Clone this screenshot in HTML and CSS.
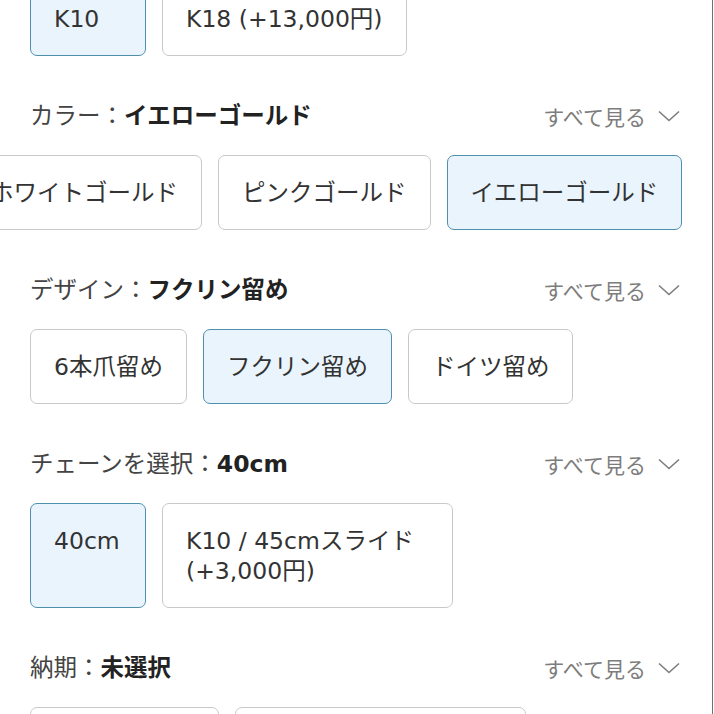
FILE: index.html
```html
<!DOCTYPE html>
<html lang="ja">
<head>
<meta charset="utf-8">
<title>オプション選択</title>
<link rel="stylesheet" href="styles.css">
</head>
<body>
<div class="page">
  <div class="inner">
    <section class="group group-first">
      <div class="options">
        <button class="opt is-selected"><span class="opt-text">K10</span></button>
        <button class="opt"><span class="opt-text">K18 (+13,000円)</span></button>
      </div>
    </section>

    <section class="group">
      <div class="group-head">
        <div class="label">カラー：<b>イエローゴールド</b></div>
        <button class="see-all">すべて見る<svg class="chev" viewBox="0 0 22 12" width="22" height="12"><path d="M1 1.5 L11 10.5 L21 1.5" fill="none" stroke="#7d7d7d" stroke-width="1.6"/></svg></button>
      </div>
      <div class="options options-scrolled">
        <button class="opt"><span class="opt-text">ホワイトゴールド</span></button>
        <button class="opt"><span class="opt-text">ピンクゴールド</span></button>
        <button class="opt is-selected"><span class="opt-text">イエローゴールド</span></button>
      </div>
    </section>

    <section class="group">
      <div class="group-head">
        <div class="label">デザイン：<b>フクリン留め</b></div>
        <button class="see-all">すべて見る<svg class="chev" viewBox="0 0 22 12" width="22" height="12"><path d="M1 1.5 L11 10.5 L21 1.5" fill="none" stroke="#7d7d7d" stroke-width="1.6"/></svg></button>
      </div>
      <div class="options">
        <button class="opt"><span class="opt-text">6本爪留め</span></button>
        <button class="opt is-selected"><span class="opt-text">フクリン留め</span></button>
        <button class="opt"><span class="opt-text">ドイツ留め</span></button>
      </div>
    </section>

    <section class="group">
      <div class="group-head">
        <div class="label">チェーンを選択：<b>40cm</b></div>
        <button class="see-all">すべて見る<svg class="chev" viewBox="0 0 22 12" width="22" height="12"><path d="M1 1.5 L11 10.5 L21 1.5" fill="none" stroke="#7d7d7d" stroke-width="1.6"/></svg></button>
      </div>
      <div class="options">
        <button class="opt is-selected"><span class="opt-text">40cm</span></button>
        <button class="opt"><span class="opt-text">K10 / 45cmスライド (+3,000円)</span></button>
      </div>
    </section>

    <section class="group">
      <div class="group-head">
        <div class="label">納期：<b>未選択</b></div>
        <button class="see-all">すべて見る<svg class="chev" viewBox="0 0 22 12" width="22" height="12"><path d="M1 1.5 L11 10.5 L21 1.5" fill="none" stroke="#7d7d7d" stroke-width="1.6"/></svg></button>
      </div>
      <div class="options">
        <button class="opt"><span class="opt-text">通常お届け便</span></button>
        <button class="opt"><span class="opt-text">お急ぎ便（+2,000円）</span></button>
      </div>
    </section>
  </div>
</div>
</body>
</html>
```

FILE: styles.css
```css
html, body {
  margin: 0;
  padding: 0;
  background: #ffffff;
  overflow: hidden;
}

.page {
  box-sizing: border-box;
  width: 713px;
  height: 714px;
  overflow: hidden;
  border-right: 1px solid #707070;
  font-family: "DejaVu Sans", "Noto Sans CJK JP", sans-serif;
  font-size: 23.5px;
  color: #333333;
}

.inner {
  display: flex;
  flex-direction: column;
  gap: 46px;
  padding: 0 30px 0 30px;
}

.group-first {
  margin-top: -19px;
}

.group-head {
  display: flex;
  align-items: center;
  justify-content: space-between;
  height: 30px;
  margin-bottom: 23px;
}

.label {
  line-height: 30px;
  margin-top: -3px;
  color: #444444;
  white-space: nowrap;
}

.label b {
  font-weight: 700;
  color: #222222;
}

.see-all {
  display: flex;
  align-items: center;
  gap: 12px;
  border: 0;
  background: none;
  padding: 0;
  margin-top: -3px;
  margin-right: 2px;
  font-family: "Noto Sans CJK JP", sans-serif;
  font-size: 21px;
  line-height: 30px;
  color: #7d7d7d;
}

.chev {
  display: block;
}

.options {
  display: flex;
  gap: 16px;
  align-items: stretch;
}

.options-scrolled {
  margin-left: -64px;
}

.opt {
  flex: 0 0 auto;
  display: flex;
  flex-direction: column;
  justify-content: flex-start;
  align-items: flex-start;
  box-sizing: border-box;
  min-width: 116px;
  max-width: 291px;
  padding: 22px 23px 21px 23px;
  border: 1px solid #c9c9c9;
  border-radius: 7px;
  background: #ffffff;
  font: inherit;
  line-height: 30px;
  color: #333333;
  text-align: left;
  white-space: normal;
}

.opt-text {
  display: block;
}

.opt.is-selected {
  background: #eaf4fc;
  border-color: #4f8fae;
}
```
